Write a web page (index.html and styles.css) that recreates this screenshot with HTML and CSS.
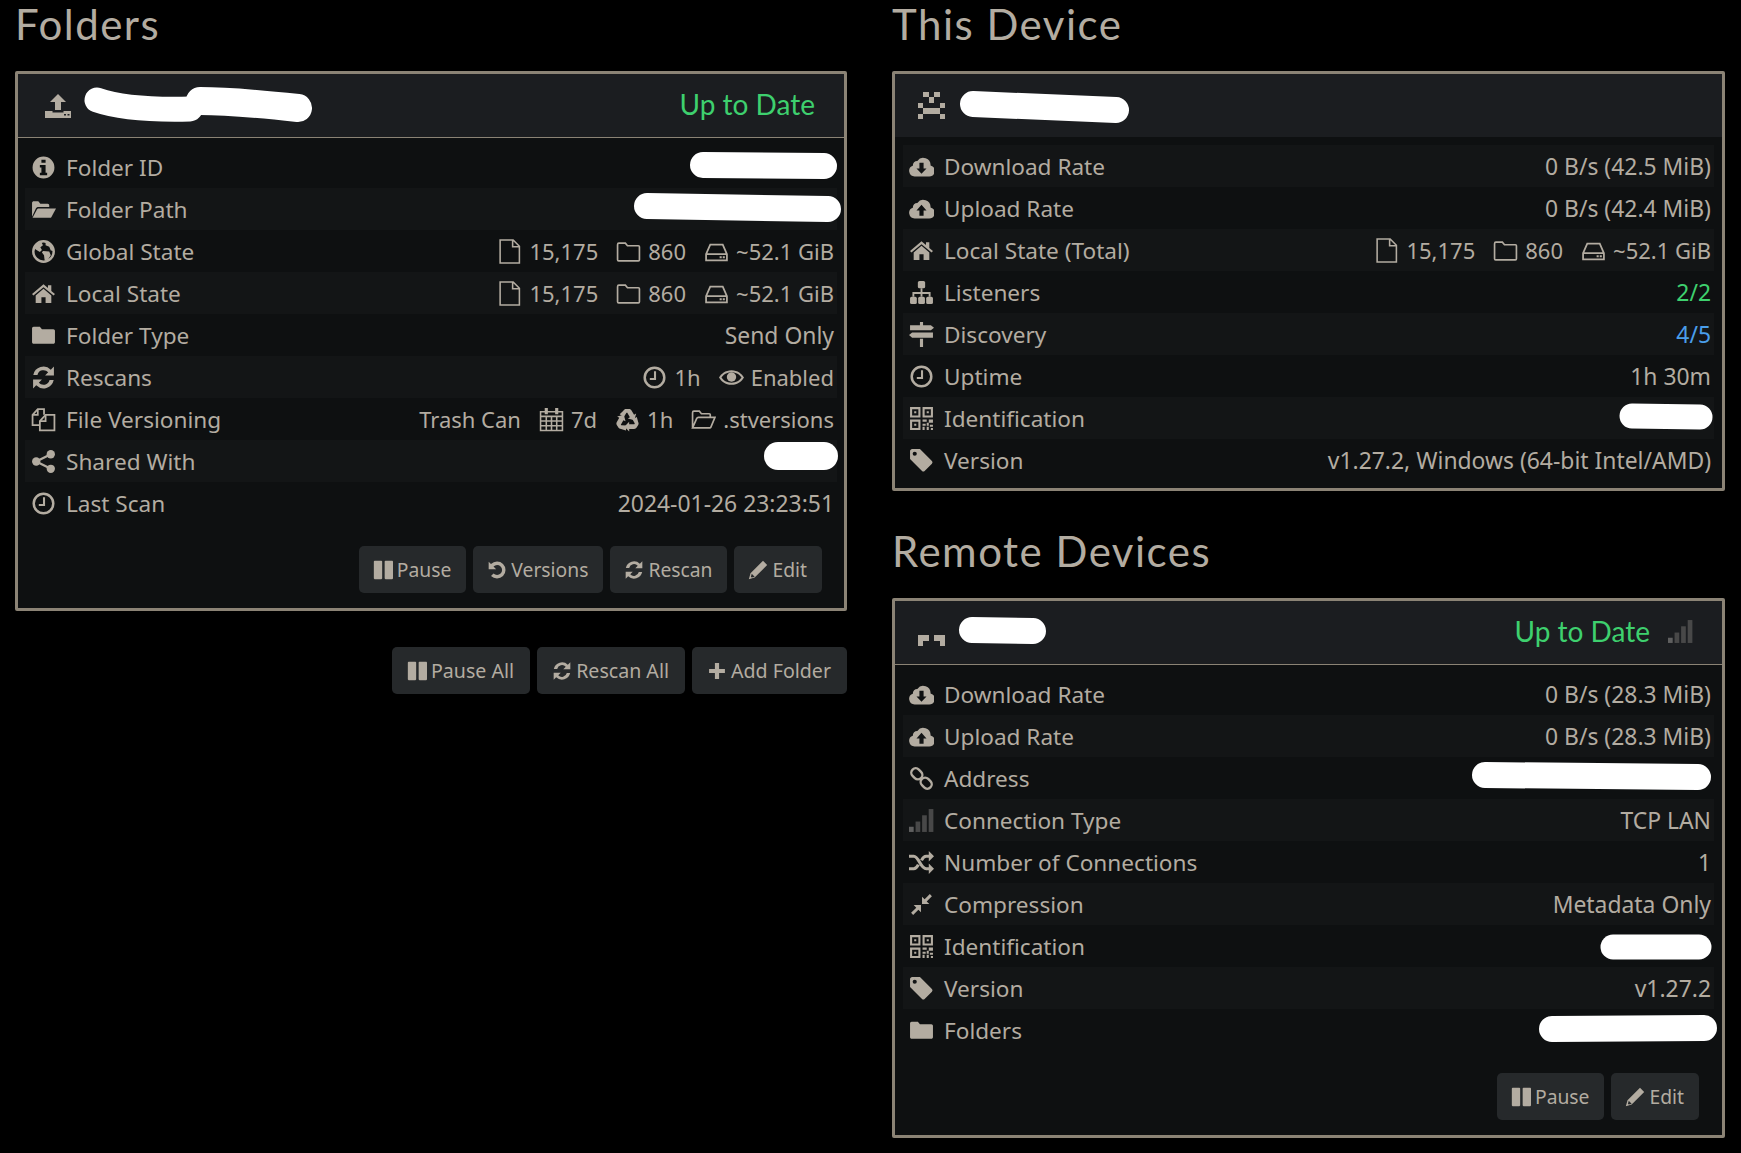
FILE: index.html
```html
<!DOCTYPE html>
<html lang="en">
<head>
    <meta charset="UTF-8">
    <meta name="viewport" content="width=device-width, initial-scale=1.0">
    <title>Syncthing</title>
    <link rel="stylesheet" href="styles.css">
</head>
<body>

    <!-- icon sprite -->
    <svg class="sprite" xmlns="http://www.w3.org/2000/svg">
        <symbol id="i-send" viewBox="0 0 26 24"><path d="M13 0l8 8h-5v8h-6V8H5z"/><path fill-rule="evenodd" d="M0 17h7.500v1.500h11V17H26v7H0zM19 20v1.500h2V20zM22.500 20v1.500h2V20z"/></symbol>
        <symbol id="i-info" viewBox="0 0 24 24"><path fill-rule="evenodd" d="M12 1.500a10.500 10.500 0 1 0 0 21 10.500 10.500 0 0 0 0-21zM10 4.500h4v3h-4zM8.500 9.500H14v7.500h1.500v2.500h-7V17H10v-5H8.500z"/></symbol>
        <symbol id="i-folder-open" viewBox="0 0 24 24"><path d="M1 19V5.500C1 4.500 2 4 2.500 4H7l2 2.500h7c1 0 1.500.7 1.500 1.500v1.500H7c-1 0-1.800.6-2.200 1.300z"/><path d="M7 11h17l-4.500 8.500c-.3.4-.8.5-1.200.5H1.500L5.700 12c.3-.5.8-1 1.300-1z"/></symbol>
        <symbol id="i-folder-open-o" viewBox="0 0 24 24"><path d="M1.500 20V5.500c0-.8.5-1.500 1.300-1.500H8l2 2.500h7.500c.6 0 1 .4 1 1V10M1.500 20l4-9c.3-.6.7-1 1.500-1H23l-4 9.500c-.2.4-.6.5-1 .5z" fill="none" stroke="currentColor" stroke-width="1.600"/></symbol>
        <symbol id="i-folder" viewBox="0 0 24 24"><path d="M2.500 3.500h6L10.500 6h11c.8 0 1.500.7 1.500 1.500v11c0 .8-.7 1.500-1.500 1.500h-19C1.700 20 1 19.300 1 18.500v-13.500c0-.8.7-1.500 1.500-1.500z"/></symbol>
        <symbol id="i-globe" viewBox="0 0 24 24"><circle cx="12" cy="12" r="9.800" fill="none" stroke="currentColor" stroke-width="2.400"/><path d="M5 5l5-2 1.500 3-2.500 2 1.500 2.500-2 2-4-2.500-2-2zM11.500 11.500l6 .5 1.500 3.500-3.500 5.500-2.500-1-.5-4.500-2-2.500zM14 2.500l5.500 3 2.500 6-3-.5-1.500-3.500-3.500-1.500z"/></symbol>
        <symbol id="i-home" viewBox="0 0 24 24"><path d="M12 3L1 12.500l1.300 1.500L12 6l9.700 8 1.300-1.500L19.500 9.500V4h-3.200v2.800z"/><path d="M12 7.500l-7.500 6.300V21h5.500v-5.500h4V21h5.500v-7.200z"/></symbol>
        <symbol id="i-refresh" viewBox="0 0 24 24"><path d="M22 1.500V10h-8.500l3-3A6 6 0 0 0 6.200 9.500H2.200A10 10 0 0 1 19 4.500z"/><path d="M2 22.500V14h8.500l-3 3A6 6 0 0 0 17.800 14.500h4A10 10 0 0 1 5 19.500z"/></symbol>
        <symbol id="i-files" viewBox="0 0 24 24"><g fill="none" stroke="currentColor" stroke-width="1.700"><path d="M8.500 17.500h-7v-10l5-5.500h6v5.500"/><path d="M6.500 2v5.500h-5"/><path d="M8.500 13.500l5.500-6h8.500v15h-14z"/><path d="M14 8v5.500H8.500"/></g></symbol>
        <symbol id="i-share" viewBox="0 0 24 24"><circle cx="19" cy="5" r="4"/><circle cx="5" cy="12" r="4"/><circle cx="19" cy="19" r="4"/><path d="M19 5L5 12l14 7" fill="none" stroke="currentColor" stroke-width="2.200"/></symbol>
        <symbol id="i-clock" viewBox="0 0 24 24"><circle cx="12" cy="12" r="9.400" fill="none" stroke="currentColor" stroke-width="2.400"/><path d="M12.500 6v7.500H7.500" fill="none" stroke="currentColor" stroke-width="2"/></symbol>
        <symbol id="i-file" viewBox="0 0 24 24"><path d="M3 1h12.500L21.500 7v16H3zM15 1v6.500h6.500" fill="none" stroke="currentColor" stroke-width="1.500"/></symbol>
        <symbol id="i-folder-o" viewBox="0 0 24 24"><path d="M1.500 5.500c0-.8.5-1.500 1.300-1.500H9l2 2.500h10.500c.6 0 1 .5 1 1V20c0 .6-.4 1-1 1H2.500c-.6 0-1-.4-1-1z" fill="none" stroke="currentColor" stroke-width="1.600"/></symbol>
        <symbol id="i-hdd" viewBox="0 0 24 24"><path d="M2 14.500L6 5.500h12l4 9v6H2zM2 14.500h20" fill="none" stroke="currentColor" stroke-width="1.700"/><path d="M15 16.500h2v2h-2zM18 16.500h2v2h-2z"/></symbol>
        <symbol id="i-calendar" viewBox="0 0 24 24"><path d="M1.500 4.500h21v18h-21zM1.500 9h21M1.500 13.500h21M1.500 18h21M7 9v13.500M12 9v13.500M17 9v13.500" fill="none" stroke="currentColor" stroke-width="1.500"/><path d="M5.500 1h3v6h-3zM15.500 1h3v6h-3z"/></symbol>
        <symbol id="i-recycle" viewBox="0 0 24 24"><g id="recycle-arm"><path d="M8 3.500C8.600 2.500 9.500 2 10.500 2h3c1 0 2 .5 2.500 1.500l2.300 4 2-1.200-1.700 6.400-6.300-1.700 2-1.200-2.500-4.300H11L8.500 9.500 4.500 7z"/></g><use href="#recycle-arm" transform="rotate(120 12 13)"/><use href="#recycle-arm" transform="rotate(240 12 13)"/></symbol>
        <symbol id="i-eye" viewBox="0 0 24 24"><path fill-rule="evenodd" d="M12 5C6 5 2 8.500 0 12c2 3.500 6 7 12 7s10-3.500 12-7c-2-3.500-6-7-12-7zM12 7c4.500 0 7.800 2.300 9.600 5-1.800 2.700-5.100 5-9.600 5s-7.800-2.300-9.600-5C4.200 9.300 7.500 7 12 7z"/><circle cx="12" cy="11.500" r="4.500"/></symbol>
        <symbol id="i-pause" viewBox="0 0 24 24"><rect x="1" y="1" width="10" height="22" rx="1"/><rect x="14" y="1" width="10" height="22" rx="1"/></symbol>
        <symbol id="i-history" viewBox="0 0 24 24"><path d="M2 2v9h9L7.800 7.800A6 6 0 1 1 7.800 16.200L4.800 19.200A10.200 10.200 0 1 0 4.800 4.800z"/></symbol>
        <symbol id="i-pencil" viewBox="0 0 24 24"><path fill-rule="evenodd" d="M18 1l5 5L8 21l-7 2 2-7zM4.500 16.500l-1 3.500 1 1 3.500-1z"/></symbol>
        <symbol id="i-plus" viewBox="0 0 24 24"><path d="M9.500 2.500h5v7h7v5h-7v7h-5v-7h-7v-5h7z"/></symbol>
        <symbol id="i-cloud-down" viewBox="0 0 24 24"><path fill-rule="evenodd" d="M5.500 21.500a5.300 5.300 0 0 1-1.800-10.300 4.200 4.200 0 0 1 4.300-4.500A7 7 0 0 1 20.700 11.100 5.300 5.300 0 0 1 19 21.500zM10 8.500v5.500H7.200l4.800 5 4.800-5H14V8.500z"/></symbol>
        <symbol id="i-cloud-up" viewBox="0 0 24 24"><path fill-rule="evenodd" d="M5.500 21.500a5.300 5.300 0 0 1-1.800-10.300 4.200 4.200 0 0 1 4.300-4.500A7 7 0 0 1 20.700 11.100 5.300 5.300 0 0 1 19 21.500zM12 8.500l-4.800 5.500H10v5h4v-5h2.800z"/></symbol>
        <symbol id="i-sitemap" viewBox="0 0 24 24"><rect x="8.500" y="1" width="7" height="7" rx="1.500"/><rect x="1" y="16" width="6.500" height="7" rx="1.500"/><rect x="8.800" y="16" width="6.500" height="7" rx="1.500"/><rect x="16.500" y="16" width="6.500" height="7" rx="1.500"/><path d="M12 8v8M4.200 16v-3.500h15.600V16" fill="none" stroke="currentColor" stroke-width="1.800"/></symbol>
        <symbol id="i-signs" viewBox="0 0 24 24"><path d="M10.500 0h3v3h7.500l3 2.500-3 2.500H1V3h9.500zM3 10h20v5H3L0 12.500zM10.500 16h3v8h-3z"/></symbol>
        <symbol id="i-qr" viewBox="0 0 24 24"><path d="M2 2h8v8H2zM14 2h8v8h-8zM2 14h8v8H2z" fill="none" stroke="currentColor" stroke-width="2"/><path d="M5 5h2v2H5zM17 5h2v2h-2zM5 17h2v2H5zM13 13h4v2h-4zM19 13h4v3h-4zM13 17h3v2h-3zM17 16h2v3h-2zM20 18h3v2h-3zM13 20h2v3h-2zM17 20h2v3h-2zM21 21h2v2h-2z"/></symbol>
        <symbol id="i-tag" viewBox="0 0 24 24"><path fill-rule="evenodd" d="M3 1h7.500l11.500 11.500a1.800 1.800 0 0 1 0 2.500l-7 7a1.800 1.800 0 0 1-2.500 0L1 10.500V3c0-1 1-2 2-2zM5.500 3.500a2 2 0 1 0 0 4 2 2 0 0 0 0-4z"/></symbol>
        <symbol id="i-link" viewBox="0 0 24 24"><g fill="none" stroke="currentColor" stroke-width="2.300"><rect x="1.750" y="3.250" width="11.500" height="8.500" rx="4.250" transform="rotate(45 7.500 7.500)"/><rect x="10.750" y="12.250" width="11.500" height="8.500" rx="4.250" transform="rotate(45 16.500 16.500)"/></g></symbol>
        <symbol id="i-signal" viewBox="0 0 24 24"><rect x="0" y="18" width="4.500" height="5" fill="#5f5f5f"/><rect x="6.300" y="13" width="4.500" height="10" fill="#484848"/><rect x="12.600" y="7" width="4.500" height="16" fill="#484848"/><rect x="18.900" y="1" width="4.500" height="22" fill="#484848"/></symbol>
        <symbol id="i-random" viewBox="0 0 24 24"><path d="M0 6h4.500c5 0 6.500 12 12 12H20" fill="none" stroke="currentColor" stroke-width="3"/><path d="M0 18h4.500c2 0 3.500-2 4.500-4M12 10c1-2 2.500-4 4.500-4H20" fill="none" stroke="currentColor" stroke-width="3"/><path d="M19 1l5 5-5 5zM19 13l5 5-5 5z"/></symbol>
        <symbol id="i-compress" viewBox="0 0 24 24"><path d="M12.500 11.500V4.500l2.500 2.500L20 2l2 2-5 5 2.500 2.500zM11.500 12.500v7L9 17l-5 5-2-2 5-5-2.500-2.500z"/></symbol>
    </svg>

    <div class="page">
        <div class="col">
            <h2>Folders</h2>
            <section class="panel">
                <header class="panel-head ruled">
                    <svg class="head-icon"><use href="#i-send"/></svg>
                    <span class="status">Up to Date</span>
                </header>
                <div class="panel-body">
                    <div class="row"><svg class="ic"><use href="#i-info"/></svg><span class="label">Folder ID</span></div>
                    <div class="row"><svg class="ic"><use href="#i-folder-open"/></svg><span class="label">Folder Path</span></div>
                    <div class="row"><svg class="ic"><use href="#i-globe"/></svg><span class="label">Global State</span>
                        <span class="value"><span class="item"><svg class="vi"><use href="#i-file"/></svg>15,175</span><span class="item"><svg class="vi"><use href="#i-folder-o"/></svg>860</span><span class="item"><svg class="vi"><use href="#i-hdd"/></svg>~52.1 GiB</span></span></div>
                    <div class="row"><svg class="ic"><use href="#i-home"/></svg><span class="label">Local State</span>
                        <span class="value"><span class="item"><svg class="vi"><use href="#i-file"/></svg>15,175</span><span class="item"><svg class="vi"><use href="#i-folder-o"/></svg>860</span><span class="item"><svg class="vi"><use href="#i-hdd"/></svg>~52.1 GiB</span></span></div>
                    <div class="row"><svg class="ic"><use href="#i-folder"/></svg><span class="label">Folder Type</span><span class="value">Send Only</span></div>
                    <div class="row"><svg class="ic"><use href="#i-refresh"/></svg><span class="label">Rescans</span>
                        <span class="value"><span class="item"><svg class="vi"><use href="#i-clock"/></svg>1h</span><span class="item"><svg class="vi"><use href="#i-eye"/></svg>Enabled</span></span></div>
                    <div class="row"><svg class="ic"><use href="#i-files"/></svg><span class="label">File Versioning</span>
                        <span class="value"><span class="item">Trash Can</span><span class="item"><svg class="vi"><use href="#i-calendar"/></svg>7d</span><span class="item"><svg class="vi"><use href="#i-recycle"/></svg>1h</span><span class="item"><svg class="vi"><use href="#i-folder-open-o"/></svg>.stversions</span></span></div>
                    <div class="row"><svg class="ic"><use href="#i-share"/></svg><span class="label">Shared With</span></div>
                    <div class="row"><svg class="ic"><use href="#i-clock"/></svg><span class="label">Last Scan</span><span class="value">2024-01-26 23:23:51</span></div>
                    <div class="actions">
                        <button class="btn"><svg class="bi"><use href="#i-pause"/></svg>Pause</button>
                        <button class="btn"><svg class="bi"><use href="#i-history"/></svg>Versions</button>
                        <button class="btn"><svg class="bi"><use href="#i-refresh"/></svg>Rescan</button>
                        <button class="btn"><svg class="bi"><use href="#i-pencil"/></svg>Edit</button>
                    </div>
                </div>
            </section>
            <div class="bulk">
                <button class="btn"><svg class="bi"><use href="#i-pause"/></svg>Pause All</button>
                <button class="btn"><svg class="bi"><use href="#i-refresh"/></svg>Rescan All</button>
                <button class="btn"><svg class="bi"><use href="#i-plus"/></svg>Add Folder</button>
            </div>
        </div>

        <div class="col right">
            <h2>This Device</h2>
            <section class="panel even">
                <header class="panel-head">
                    <svg class="head-icon identicon" viewBox="0 0 5 5"><path d="M1 0h1v1H1zM3 0h1v1H3zM2 1h1v1H2zM0 2h1v1H0zM4 2h1v1H4zM1 3h3v1H1zM0 4h1v1H0zM4 4h1v1H4z"/></svg>
                </header>
                <div class="panel-body">
                    <div class="row"><svg class="ic"><use href="#i-cloud-down"/></svg><span class="label">Download Rate</span><span class="value">0 B/s (42.5 MiB)</span></div>
                    <div class="row"><svg class="ic"><use href="#i-cloud-up"/></svg><span class="label">Upload Rate</span><span class="value">0 B/s (42.4 MiB)</span></div>
                    <div class="row"><svg class="ic"><use href="#i-home"/></svg><span class="label">Local State (Total)</span>
                        <span class="value"><span class="item"><svg class="vi"><use href="#i-file"/></svg>15,175</span><span class="item"><svg class="vi"><use href="#i-folder-o"/></svg>860</span><span class="item"><svg class="vi"><use href="#i-hdd"/></svg>~52.1 GiB</span></span></div>
                    <div class="row"><svg class="ic"><use href="#i-sitemap"/></svg><span class="label">Listeners</span><span class="value ok">2/2</span></div>
                    <div class="row"><svg class="ic"><use href="#i-signs"/></svg><span class="label">Discovery</span><span class="value info">4/5</span></div>
                    <div class="row"><svg class="ic"><use href="#i-clock"/></svg><span class="label">Uptime</span><span class="value">1h 30m</span></div>
                    <div class="row"><svg class="ic"><use href="#i-qr"/></svg><span class="label">Identification</span></div>
                    <div class="row"><svg class="ic"><use href="#i-tag"/></svg><span class="label">Version</span><span class="value">v1.27.2, Windows (64-bit Intel/AMD)</span></div>
                </div>
            </section>

            <h2 class="next">Remote Devices</h2>
            <section class="panel">
                <header class="panel-head ruled">
                    <svg class="head-icon identicon" viewBox="0 0 5 5"><path d="M0 3h2v1H0zM3 3h2v1H3zM0 4h1v1H0zM4 4h1v1H4z"/></svg>
                    <span class="status">Up to Date</span>
                    <svg class="status-signal"><use href="#i-signal"/></svg>
                </header>
                <div class="panel-body">
                    <div class="row"><svg class="ic"><use href="#i-cloud-down"/></svg><span class="label">Download Rate</span><span class="value">0 B/s (28.3 MiB)</span></div>
                    <div class="row"><svg class="ic"><use href="#i-cloud-up"/></svg><span class="label">Upload Rate</span><span class="value">0 B/s (28.3 MiB)</span></div>
                    <div class="row"><svg class="ic"><use href="#i-link"/></svg><span class="label">Address</span></div>
                    <div class="row"><svg class="ic"><use href="#i-signal"/></svg><span class="label">Connection Type</span><span class="value">TCP LAN</span></div>
                    <div class="row"><svg class="ic"><use href="#i-random"/></svg><span class="label">Number of Connections</span><span class="value">1</span></div>
                    <div class="row"><svg class="ic"><use href="#i-compress"/></svg><span class="label">Compression</span><span class="value">Metadata Only</span></div>
                    <div class="row"><svg class="ic"><use href="#i-qr"/></svg><span class="label">Identification</span></div>
                    <div class="row"><svg class="ic"><use href="#i-tag"/></svg><span class="label">Version</span><span class="value">v1.27.2</span></div>
                    <div class="row"><svg class="ic"><use href="#i-folder"/></svg><span class="label">Folders</span></div>
                    <div class="actions">
                        <button class="btn"><svg class="bi"><use href="#i-pause"/></svg>Pause</button>
                        <button class="btn"><svg class="bi"><use href="#i-pencil"/></svg>Edit</button>
                    </div>
                </div>
            </section>
        </div>

        <!-- white pen marks over the private values -->
        <svg class="marks" width="1741" height="1153" fill="none" stroke="#fff" stroke-linecap="round">
            <path stroke-width="25" d="M97 100C120 108 150 110 190 109"/>
            <path stroke-width="28" d="M200 101C230 101 270 105 298 108"/>
            <path stroke-width="26" d="M703 165L824 166"/>
            <path stroke-width="26" d="M647 206L828 209"/>
            <path stroke-width="28" d="M778 456L824 456"/>
            <path stroke-width="26" d="M973 104L1116 110"/>
            <path stroke-width="25" d="M1632 416L1700 417"/>
            <path stroke-width="26" d="M972 630L1033 631"/>
            <path stroke-width="26" d="M1485 775L1698 777"/>
            <path stroke-width="25" d="M1613 947L1699 947"/>
            <path stroke-width="26" d="M1552 1029L1704 1028"/>
        </svg>
    </div>

</body>
</html>
```

FILE: styles.css
```css
body {
    margin: 0;
    background-color: #000;
    color: #b3aca1;
    font-family: "Noto Sans", sans-serif;
    font-size: 22.6px;
}

.sprite {
    display: none;
}

.page {
    position: relative;
    display: grid;
    grid-template-columns: 832px 833px;
    column-gap: 45px;
    padding-left: 15px;
    height: 1153px;
    box-sizing: border-box;
    overflow: hidden;
}

.marks {
    position: absolute;
    top: 0;
    left: 0;
    pointer-events: none;
}

h2 {
    margin: 0;
    height: 71px;
    font-family: Lato, sans-serif;
    font-weight: 400;
    font-size: 42px;
    line-height: 49px;
    letter-spacing: 1.5px;
}

h2.next {
    margin-top: 36px;
}

.panel {
    border: 3px solid #8b8375;
    border-radius: 2px;
    background-color: #0e1011;
}

.panel-head {
    display: flex;
    align-items: center;
    height: 63px;
    padding: 0 29px 0 27px;
    background-color: #1b1d20;
}

.panel-head.ruled {
    border-bottom: 1px solid #8b8375;
}

.head-icon {
    width: 26px;
    height: 24px;
    fill: currentColor;
}

.identicon {
    width: 27px;
    height: 27px;
    margin-left: -4px;
    shape-rendering: crispEdges;
}

.status {
    margin-left: auto;
    padding-bottom: 3px;
    font-family: Lato, sans-serif;
    font-size: 28px;
    color: #3ed06e;
}

.status-signal {
    width: 25px;
    height: 25px;
    margin-left: 18px;
    margin-bottom: 3px;
}

.panel-body {
    padding: 8px 7px 15px;
}

.even .panel-body {
    padding-bottom: 7px;
}

.right .panel-body {
    padding-left: 8px;
    padding-right: 8px;
}

.row {
    display: flex;
    align-items: center;
    height: 42px;
    padding: 0 3px 0 6px;
}

.row:nth-child(even) {
    background-color: #131516;
}

.even .row:nth-child(even) {
    background-color: transparent;
}

.even .row:nth-child(odd) {
    background-color: #131516;
}

.ic {
    flex: none;
    width: 25px;
    height: 25px;
    margin-right: 10px;
    fill: currentColor;
}

.value {
    display: flex;
    gap: 18px;
    margin-left: auto;
    font-size: 22.9px;
    white-space: nowrap;
}

.item {
    display: flex;
    align-items: center;
    gap: 7px;
    font-size: 22px;
}

.vi {
    width: 25px;
    height: 25px;
    fill: currentColor;
}

.ok {
    color: #3ed06e;
}

.info {
    color: #4a9eea;
}

.actions {
    display: flex;
    justify-content: flex-end;
    gap: 7px;
    margin-top: 22px;
    padding-right: 15px;
}

.bulk {
    display: flex;
    justify-content: flex-end;
    gap: 7px;
    margin-top: 36px;
}

.btn {
    display: flex;
    align-items: center;
    gap: 4px;
    height: 47px;
    padding: 0 15px 0 14px;
    border: 0;
    border-radius: 5px;
    background-color: #26292b;
    color: inherit;
    font: inherit;
    font-size: 19.3px;
}

.bulk .btn {
    padding: 0 16px 0 15px;
    font-size: 19.6px;
}

.bi {
    width: 20px;
    height: 20px;
    fill: currentColor;
}
```
